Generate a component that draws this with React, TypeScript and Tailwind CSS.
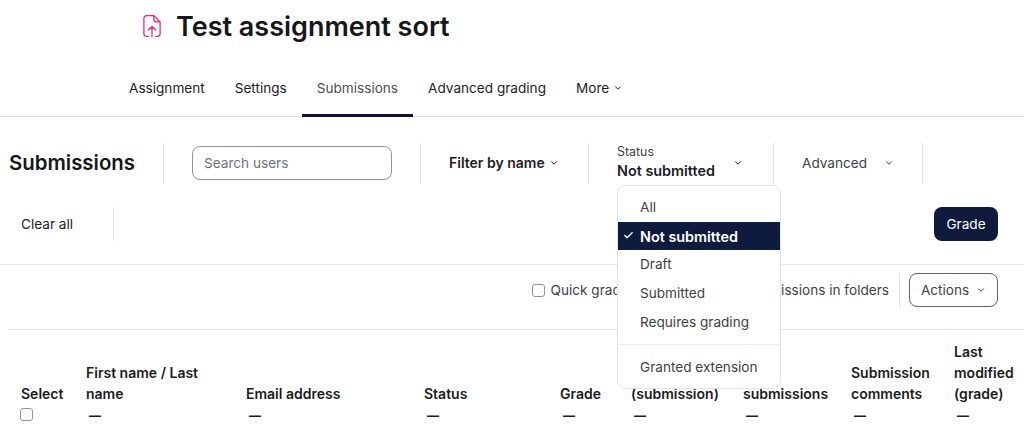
import React from 'react';
import { ChevronDown, Check } from 'lucide-react';

const tabs = ['Assignment', 'Settings', 'Submissions', 'Advanced grading'];

const statusOptions = ['Draft', 'Submitted', 'Requires grading'];

const columns = [
  { title: ['Select'], width: 'w-[65px]', check: true },
  { title: ['First name / Last', 'name'], width: 'w-[160px]' },
  { title: ['Email address'], width: 'w-[178px]' },
  { title: ['Status'], width: 'w-[136px]' },
  { title: ['Grade'], width: 'w-[71px]' },
  { title: ['Last', 'modified', '(submission)'], width: 'w-[112px]' },
  { title: ['File', 'submissions'], width: 'w-[108px]' },
  { title: ['Submission', 'comments'], width: 'w-[103px]' },
  { title: ['Last', 'modified', '(grade)'], width: 'w-[70px]' },
];

const Divider = ({ className = 'h-[41px]' }: { className?: string }) => (
  <div className={`w-px shrink-0 bg-[#e3e4e6] ${className}`} />
);

const Chevron = () => <ChevronDown size={10} strokeWidth={2.4} className="shrink-0" />;

const FileUploadIcon = () => (
  <svg className="-mt-[3px]" width="18" height="24" viewBox="0 0 20 26" fill="none" stroke="#e8238a" strokeWidth="1.4" strokeLinecap="round" strokeLinejoin="round">
    <path d="M6 24.5H4a3 3 0 0 1-3-3v-17a3 3 0 0 1 3-3h8l7 7v13a3 3 0 0 1-3 3h-2" />
    <path d="M12 1.5v4a3 3 0 0 0 3 3h4" />
    <path d="M10 25v-11M6 17.5l4-4 4 4" />
  </svg>
);

const StatusMenu = () => (
  <div className="absolute left-[617px] top-[185px] z-10 w-[164px] h-[204px] rounded-lg border border-[#e3e4e6] bg-white pt-[7px] text-[#3d3f45]">
    <div className="h-[29px] pl-[22px] flex items-center">All</div>
    <div className="relative h-[28px] pl-[22px] pt-px flex items-center bg-[#0f1b3d] text-[14.4px] font-semibold text-white">
      <Check size={11} strokeWidth={3} className="absolute left-[5px] top-[8px]" />
      Not submitted
    </div>
    {statusOptions.map((option) => (
      <div key={option} className="h-[29px] pl-[22px] flex items-center">{option}</div>
    ))}
    <div className="mt-[7px] mb-[8px] h-px bg-[#eceded]" />
    <div className="h-[29px] pl-[22px] flex items-center">Granted extension</div>
  </div>
);

export default function App() {
  return (
    <div className="relative w-[1024px] h-[437px] overflow-hidden bg-white text-[13.6px] text-[#1d2125] font-['Inter',sans-serif]">
      {/* Page title */}
      <div className="flex items-center pl-[143px] h-[57px] pb-[3px]">
        <FileUploadIcon />
        <h1 className="ml-[15px] text-[27px] font-semibold leading-8 text-[#15171a]">Test assignment sort</h1>
      </div>

      {/* Tabs */}
      <nav className="flex items-stretch h-[60px] pl-[114px] border-b border-[#dcdde0]">
        {tabs.map((tab) => (
          <a key={tab} className={`relative flex items-center px-[15px] pt-[3px] ${tab === 'Submissions' ? 'text-[#4c4f55]' : ''}`}>
            {tab}
            {tab === 'Submissions' && <span className="absolute left-0 right-0 -bottom-px h-[3px] bg-[#0f1430]" />}
          </a>
        ))}
        <a className="flex items-center gap-[4px] px-[15px] pt-[3px]">
          More <Chevron />
        </a>
      </nav>

      {/* Filters */}
      <div className="flex items-center h-[42px] mt-[25px] pl-[9px]">
        <h2 className="w-[154px] text-[20.4px] font-semibold text-[#15171a]">Submissions</h2>
        <Divider />
        <div className="px-[28px]">
          <input
            placeholder="Search users"
            className="block w-[200px] h-[34px] rounded-lg border border-[#8f959e] px-[11px] placeholder:text-[#6a737b] outline-none"
          />
        </div>
        <Divider />
        <div className="flex items-center w-[167px] pl-[28px] text-sm font-semibold">
          Filter by name <span className="ml-[4px]"><Chevron /></span>
        </div>
        <Divider />
        <div className="flex items-center w-[184px] pl-[28px]">
          <div className="w-[116px]">
            <div className="text-[12.4px] leading-[16px] text-[#3d3f45]">Status</div>
            <div className="text-[14.4px] font-semibold leading-[22px]">Not submitted</div>
          </div>
          <Chevron />
        </div>
        <Divider />
        <div className="flex items-center w-[148px] pl-[28px] text-[#3d3f45]">
          <span className="w-[82px]">Advanced</span>
          <Chevron />
        </div>
        <Divider />
      </div>

      {/* Clear all and grade */}
      <div className="flex items-center justify-between h-[34px] mt-[23px] pr-[26px] pl-[21px] ">
        <div className="flex items-center">
          <span className="w-[92px]">Clear all</span>
          <Divider className="h-[34px]" />
        </div>
        <button className="w-[64px] h-[34px] rounded-lg bg-[#0f1b3d] text-white">Grade</button>
      </div>

      <div className="mt-[23px] h-px bg-[#e3e4e6]" />

      {/* Table options */}
      <div className="flex items-center justify-end h-[65px] pb-[14px] pr-[26px] ml-[9px] border-b border-[#e3e4e6]">
        <input type="checkbox" className="w-[13px] h-[13px] appearance-none rounded-[3px] border border-[#8f959e]" />
        <span className="ml-[6px] text-[#3d3f45]">Quick grading</span>
        <input type="checkbox" className="ml-[18px] w-[13px] h-[13px]" />
        <span className="ml-[6px] text-[#3d3f45]">Download submissions in folders</span>
        <Divider className="h-[34px] ml-[10px]" />
        <button className="ml-[9px] flex items-center justify-center gap-[7px] w-[89px] h-[34px] rounded-lg border border-[#5f6368] text-[#3d3f45]">
          Actions <Chevron />
        </button>
      </div>

      {/* Table header */}
      <div className="flex items-end pl-[21px] pt-[11px] text-sm font-semibold text-[#1a1c20]">
        {columns.map((col) => (
          <div key={col.title.join(' ')} className={`shrink-0 ${col.width}`}>
            {col.title.map((line) => (
              <div key={line} className="leading-[21px]">{line}</div>
            ))}
            {col.check ? (
              <input type="checkbox" className="block -ml-px mt-[4px] mb-[5px] w-[13px] h-[13px] appearance-none rounded-[3px] border border-[#8f959e]" />
            ) : (
              <div className="pl-[3px] pt-px leading-[21px] text-[12px] font-bold">—</div>
            )}
          </div>
        ))}
      </div>

      <StatusMenu />
    </div>
  );
}
